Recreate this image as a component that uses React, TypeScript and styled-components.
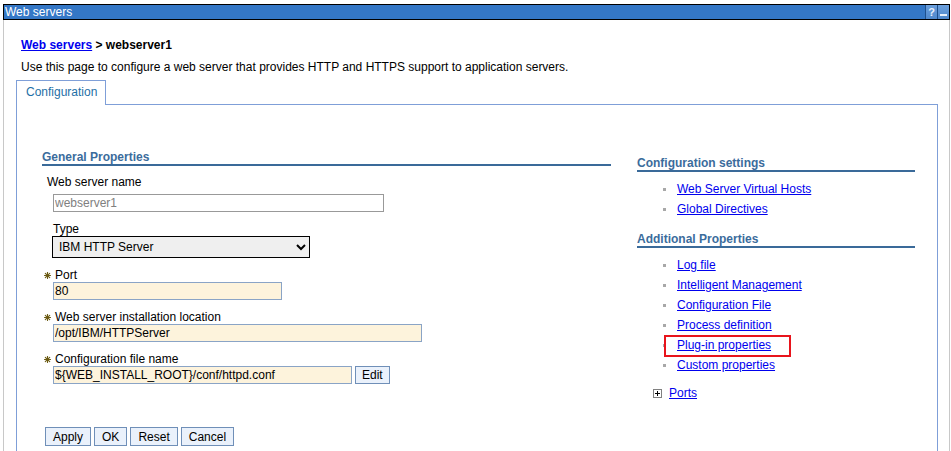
import React from "react";
import styled, { createGlobalStyle } from "styled-components";

const Global = createGlobalStyle`
  html, body { margin: 0; padding: 0; background: #fff; overflow: hidden; }
  body { font-family: "Liberation Sans", Arial, sans-serif; font-size: 12px; color: #000; }
  * { box-sizing: border-box; }
`;

const Portlet = styled.div`
  margin: 4px 0 0 3px;
  width: 947px;
`;

const TitleBar = styled.div`
  height: 16px;
  border: 1px solid #000;
  background: #3477c6;
  display: flex;
  align-items: stretch;
`;

const TitleText = styled.div`
  flex: 1;
  color: #fff;
  font-size: 12px;
  line-height: 14px;
  padding-left: 1px;
`;

const TitleIcon = styled.div<{ $last?: boolean }>`
  width: 12px;
  border-left: 1px solid #1d4f8c;
  background: linear-gradient(#6b9fdc, #4f88cc);
  color: #e8f0fb;
  font-weight: bold;
  font-size: 11px;
  line-height: 14px;
  text-align: center;
  display: flex;
  align-items: center;
  justify-content: center;
`;

const Dash = styled.span`
  display: block;
  width: 7px;
  height: 2px;
  background: #e8f0fb;
  margin-top: 5px;
`;

const Body = styled.div`
  border-left: 1px solid #c8c8c8;
  border-right: 1px solid #c8c8c8;
  padding: 18px 11px 0 17px;
  height: 440px;
`;

const Breadcrumb = styled.div`
  font-weight: bold;
  line-height: 14px;
`;

const Link = styled.a`
  color: #0000ee;
  text-decoration: underline;
  cursor: pointer;
`;

const Description = styled.div`
  margin-top: 8px;
  line-height: 14px;
`;

const TabRow = styled.div`
  margin: 6px 0 0 -5px;
  display: flex;
  height: 25px;
`;

const Tab = styled.div`
  border: 1px solid #7f9fd8;
  border-bottom: none;
  padding: 0 8px 0 9px;
  line-height: 23px;
  color: #1e6fa6;
  background: #fff;
`;

const TabFiller = styled.div`
  flex: 1;
  border-bottom: 1px solid #7f9fd8;
`;

const TabPanel = styled.div`
  margin-left: -5px;
  border-left: 1px solid #7f9fd8;
  border-right: 1px solid #7f9fd8;
  padding: 0 22px 0 25px;
  display: flex;
  gap: 26px;
  height: 360px;
`;

const LeftColumn = styled.div`
  width: 569px;
  padding-top: 45px;
`;

const RightColumn = styled.div`
  width: 278px;
  padding-top: 51px;
`;

const SectionHeader = styled.div<{ $gap?: number }>`
  margin-top: ${(p) => p.$gap ?? 0}px;
  font-weight: bold;
  color: #3b6c9c;
  line-height: 14px;
  border-bottom: 2px solid #3a6a99;
`;

const FieldLabel = styled.div<{ $indent: number; $gap: number }>`
  margin: ${(p) => p.$gap}px 0 0 ${(p) => p.$indent}px;
  line-height: 14px;
  display: flex;
  align-items: center;
`;

const Star = styled.svg`
  width: 7px;
  height: 7px;
  margin-right: 4px;
  flex: none;
`;

const InputRow = styled.div<{ $gap: number }>`
  margin: ${(p) => p.$gap}px 0 0 11px;
  display: flex;
  gap: 3px;
`;

const TextInput = styled.input<{ $w: number; $required?: boolean }>`
  width: ${(p) => p.$w}px;
  height: 18px;
  padding: 0 1px;
  font-family: inherit;
  font-size: 12px;
  border: 1px solid ${(p) => (p.$required ? "#8aa4c6" : "#999")};
  background: ${(p) => (p.$required ? "#fdf3dc" : "#fff")};
  color: ${(p) => (p.$required ? "#000" : "#808080")};
  outline: none;
`;

const Select = styled.select`
  margin-left: -1px;
  width: 258px;
  height: 22px;
  font-family: inherit;
  font-size: 12px;
  border: 1px solid #000;
  border-radius: 0;
  background: #efefef;
  color: #000;
  padding: 0 2px;
`;

const SmallButton = styled.button`
  height: 18px;
  padding: 0 6px;
  font-family: inherit;
  font-size: 12px;
  line-height: 16px;
  color: #000;
  background: #eaf1fb;
  border: 1px solid #6f8fb8;
  border-radius: 0;
`;

const ButtonBar = styled.div`
  margin: 43px 0 0 3px;
  display: flex;
  gap: 3px;
`;

const ActionButton = styled(SmallButton)`
  height: 19px;
  padding: 0 7px;
`;

const LinkList = styled.ul`
  list-style: none;
  margin: 7px 0 0;
  padding: 0 0 0 26px;
`;

const LinkItem = styled.li`
  position: relative;
  height: 20px;
  display: flex;
  align-items: center;
  &::before {
    content: "";
    width: 3px;
    height: 3px;
    background: #a8a8a8;
    margin-right: 11px;
  }
`;

const Highlight = styled.span`
  position: absolute;
  left: 1px;
  top: 0;
  width: 127px;
  height: 22px;
  border: 2px solid #e8141c;
  pointer-events: none;
`;

const PortsRow = styled.div`
  margin-top: 8px;
  padding-left: 16px;
  height: 20px;
  display: flex;
  align-items: center;
  gap: 7px;
`;

const PlusBox = styled.svg`
  width: 9px;
  height: 9px;
  flex: none;
`;

const RequiredStar = () => (
  <Star viewBox="0 0 7 7">
    <g stroke="#6b5a12" strokeWidth="1.1" strokeLinecap="round">
      <line x1="3.5" y1="0.5" x2="3.5" y2="6.5" />
      <line x1="0.5" y1="3.5" x2="6.5" y2="3.5" />
      <line x1="1.3" y1="1.3" x2="5.7" y2="5.7" />
      <line x1="5.7" y1="1.3" x2="1.3" y2="5.7" />
    </g>
  </Star>
);

const configLinks = ["Web Server Virtual Hosts", "Global Directives"];
const additionalLinks = [
  "Log file",
  "Intelligent Management",
  "Configuration File",
  "Process definition",
  "Plug-in properties",
  "Custom properties",
];

export default function App() {
  return (
    <>
      <Global />
      <Portlet>
        <TitleBar>
          <TitleText>Web servers</TitleText>
          <TitleIcon>?</TitleIcon>
          <TitleIcon $last>
            <Dash />
          </TitleIcon>
        </TitleBar>
        <Body>
          <Breadcrumb>
            <Link>Web servers</Link> &gt; webserver1
          </Breadcrumb>
          <Description>
            Use this page to configure a web server that provides HTTP and HTTPS support to application servers.
          </Description>
          <TabRow>
            <Tab>Configuration</Tab>
            <TabFiller />
          </TabRow>
          <TabPanel>
            <LeftColumn>
              <SectionHeader>General Properties</SectionHeader>
              <FieldLabel $indent={5} $gap={9}>Web server name</FieldLabel>
              <InputRow $gap={5}>
                <TextInput $w={331} defaultValue="webserver1" readOnly />
              </InputRow>
              <FieldLabel $indent={11} $gap={10}>Type</FieldLabel>
              <InputRow $gap={0}>
                <Select defaultValue="ihs">
                  <option value="ihs">IBM HTTP Server</option>
                </Select>
              </InputRow>
              <FieldLabel $indent={2} $gap={10}>
                <RequiredStar />
                Port
              </FieldLabel>
              <InputRow $gap={0}>
                <TextInput $w={229} $required defaultValue="80" />
              </InputRow>
              <FieldLabel $indent={2} $gap={10}>
                <RequiredStar />
                Web server installation location
              </FieldLabel>
              <InputRow $gap={0}>
                <TextInput $w={369} $required defaultValue="/opt/IBM/HTTPServer" />
              </InputRow>
              <FieldLabel $indent={2} $gap={10}>
                <RequiredStar />
                Configuration file name
              </FieldLabel>
              <InputRow $gap={0}>
                <TextInput $w={299} $required defaultValue="${WEB_INSTALL_ROOT}/conf/httpd.conf" />
                <SmallButton>Edit</SmallButton>
              </InputRow>
              <ButtonBar>
                <ActionButton>Apply</ActionButton>
                <ActionButton>OK</ActionButton>
                <ActionButton>Reset</ActionButton>
                <ActionButton>Cancel</ActionButton>
              </ButtonBar>
            </LeftColumn>
            <RightColumn>
              <SectionHeader>Configuration settings</SectionHeader>
              <LinkList>
                {configLinks.map((l) => (
                  <LinkItem key={l}>
                    <Link>{l}</Link>
                  </LinkItem>
                ))}
              </LinkList>
              <SectionHeader $gap={13}>Additional Properties</SectionHeader>
              <LinkList>
                {additionalLinks.map((l) => (
                  <LinkItem key={l}>
                    <Link>{l}</Link>
                    {l === "Plug-in properties" && <Highlight />}
                  </LinkItem>
                ))}
              </LinkList>
              <PortsRow>
                <PlusBox viewBox="0 0 9 9">
                  <rect x="0.5" y="0.5" width="8" height="8" fill="#fff" stroke="#808080" />
                  <line x1="2" y1="4.5" x2="7" y2="4.5" stroke="#000" />
                  <line x1="4.5" y1="2" x2="4.5" y2="7" stroke="#000" />
                </PlusBox>
                <Link>Ports</Link>
              </PortsRow>
            </RightColumn>
          </TabPanel>
        </Body>
      </Portlet>
    </>
  );
}
